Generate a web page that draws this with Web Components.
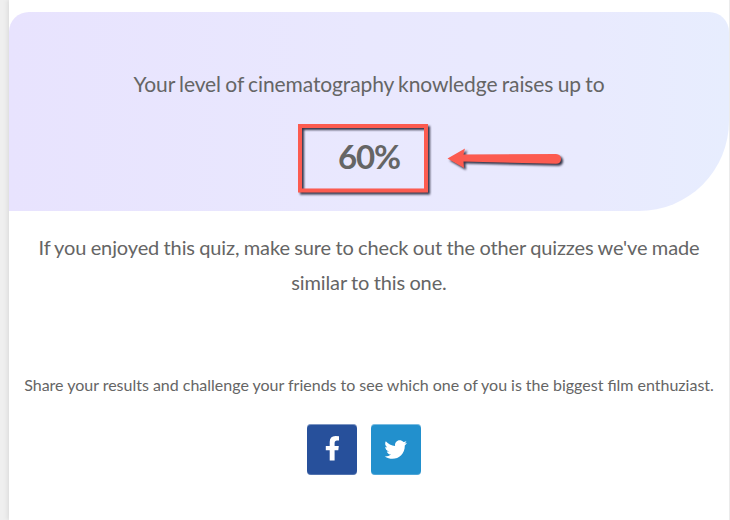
<!DOCTYPE html>
<html lang="en"><head><meta charset="utf-8"><title>Quiz result</title>
<style>
html,body{margin:0;height:520px;overflow:hidden}
body{background:#efefef;font-family:Lato,"Liberation Sans",sans-serif;color:#656565}
</style></head><body>
<quiz-page>
  <score-panel>
    <span slot="label">Your level of cinematography knowledge raises up to</span>
    <span slot="score">60%</span>
    <callout-mark></callout-mark>
  </score-panel>
  <quiz-note>If you enjoyed this quiz, make sure to check out the other quizzes we've made similar to this one.</quiz-note>
  <share-bar>Share your results and challenge your friends to see which one of you is the biggest film enthuziast.
    <share-button slot="buttons" kind="facebook"></share-button>
    <share-button slot="buttons" kind="twitter"></share-button>
  </share-bar>
</quiz-page>
<script>
const define = (name, html, setup) => customElements.define(name, class extends HTMLElement {
  constructor() { super(); this.attachShadow({mode:'open'}).innerHTML = html; }
  connectedCallback() { if (setup) setup(this); }
});
define('quiz-page', `<style>
:host{display:flex;flex-direction:column;box-sizing:border-box;width:721px;height:520px;margin-left:9px;padding-top:12px;background:#fff;border-right:1px solid #ebebeb;box-shadow:-2px 0 4px #dedede}
</style><slot></slot>`);
define('score-panel', `<style>
:host{position:relative;display:flex;flex-direction:column;align-items:center;box-sizing:border-box;height:199px;padding-top:54px;border-radius:20px 20px 90px 0;background:linear-gradient(90deg,#e8e3fe,#e9e8fe 50%,#e9eafe 80%,#e7edfe)}
.label{font-size:21px;line-height:36px;white-space:nowrap;word-spacing:-.9px;letter-spacing:-.11px}
.score{font-size:33px;line-height:44px;font-weight:700;margin-top:32px;letter-spacing:-1.1px}
</style><div class="label"><slot name="label"></slot></div><div class="score"><slot name="score"></slot></div><slot></slot>`);
define('callout-mark', `<style>
:host{position:absolute;left:281px;top:104px;width:290px;height:84px}
svg{display:block;filter:drop-shadow(2px 2px 1.2px rgba(20,20,40,.85))}
</style><svg width="290" height="84" viewBox="290 116 290 84">
<rect x="300" y="126" width="126" height="64.5" fill="none" stroke="#fc5b50" stroke-width="4"/>
<path d="M447.5 158.5L465 148.5L463.5 154.5L556 154Q561 154.5 561 159Q561 163.5 556 163.8L463.5 161.5L464 168Z" fill="#fc5b50"/></svg>`);
define('quiz-note', `<style>
:host{display:block;padding:19px 20px 0;text-align:center;font-size:20px;line-height:35px;word-spacing:-.6px;letter-spacing:-.12px;font-variant-ligatures:common-ligatures}
</style><slot></slot>`);
define('share-bar', `<style>
:host{display:flex;flex-direction:column;align-items:center;margin-top:72px}
.text{font-size:16px;line-height:26px;white-space:nowrap;word-spacing:-.08px}
.buttons{display:flex;gap:14px;margin-top:26px;padding-right:10px}
</style><div class="text"><slot></slot></div><div class="buttons"><slot name="buttons"></slot></div>`);
const icons = {
 facebook:['#27509b','M334.6 460.5V450.2H338.3L338.8 446H334.6V443.3Q334.6 440.6 337 440.6H339V436.3Q337.4 436 335.5 436Q329.7 436 329.7 442V446H325.8V450.2H329.7V460.5Z'],
 twitter:['#2290cd','M407 442.7C406.2 443.1 405.3 443.4 404.4 443.5C405.4 442.9 406.1 442 406.4 440.9C405.5 441.4 404.5 441.8 403.5 442C399.8 438.2 394.2 441.2 395.1 446C391.4 445.8 388 444 385.8 441.3C384.6 443.3 385.1 445.8 387.2 447.3C386.5 447.3 385.8 447.1 385.2 446.7C385.2 448.9 386.7 450.8 388.9 451.3C388.2 451.5 387.5 451.5 386.8 451.4C387.4 453.2 389.1 454.5 391.1 454.6C389.3 455.9 387.1 456.6 384.7 456.5C394.1 462.3 405 456.4 404.8 445.4C405.7 444.7 406.4 443.8 407 442.7Z']
};
define('share-button', `<style>
:host{display:block;box-sizing:border-box;width:50px;height:51px;border-radius:4px;box-shadow:inset 0 1px rgba(255,255,255,.4),inset 0 -1px rgba(255,255,255,.2)}
svg{display:block}
</style><svg width="50" height="51" aria-hidden="true"><path fill="#fff"/></svg>`, el => {
  const kind = el.getAttribute('kind'), [color, path] = icons[kind];
  el.style.background = color;
  el.setAttribute('role','button');
  el.setAttribute('aria-label', kind);
  el.shadowRoot.querySelector('svg').setAttribute('viewBox', (kind==='facebook'?307:371)+' 424 50 51');
  el.shadowRoot.querySelector('path').setAttribute('d', path);
});
</script></body></html>
